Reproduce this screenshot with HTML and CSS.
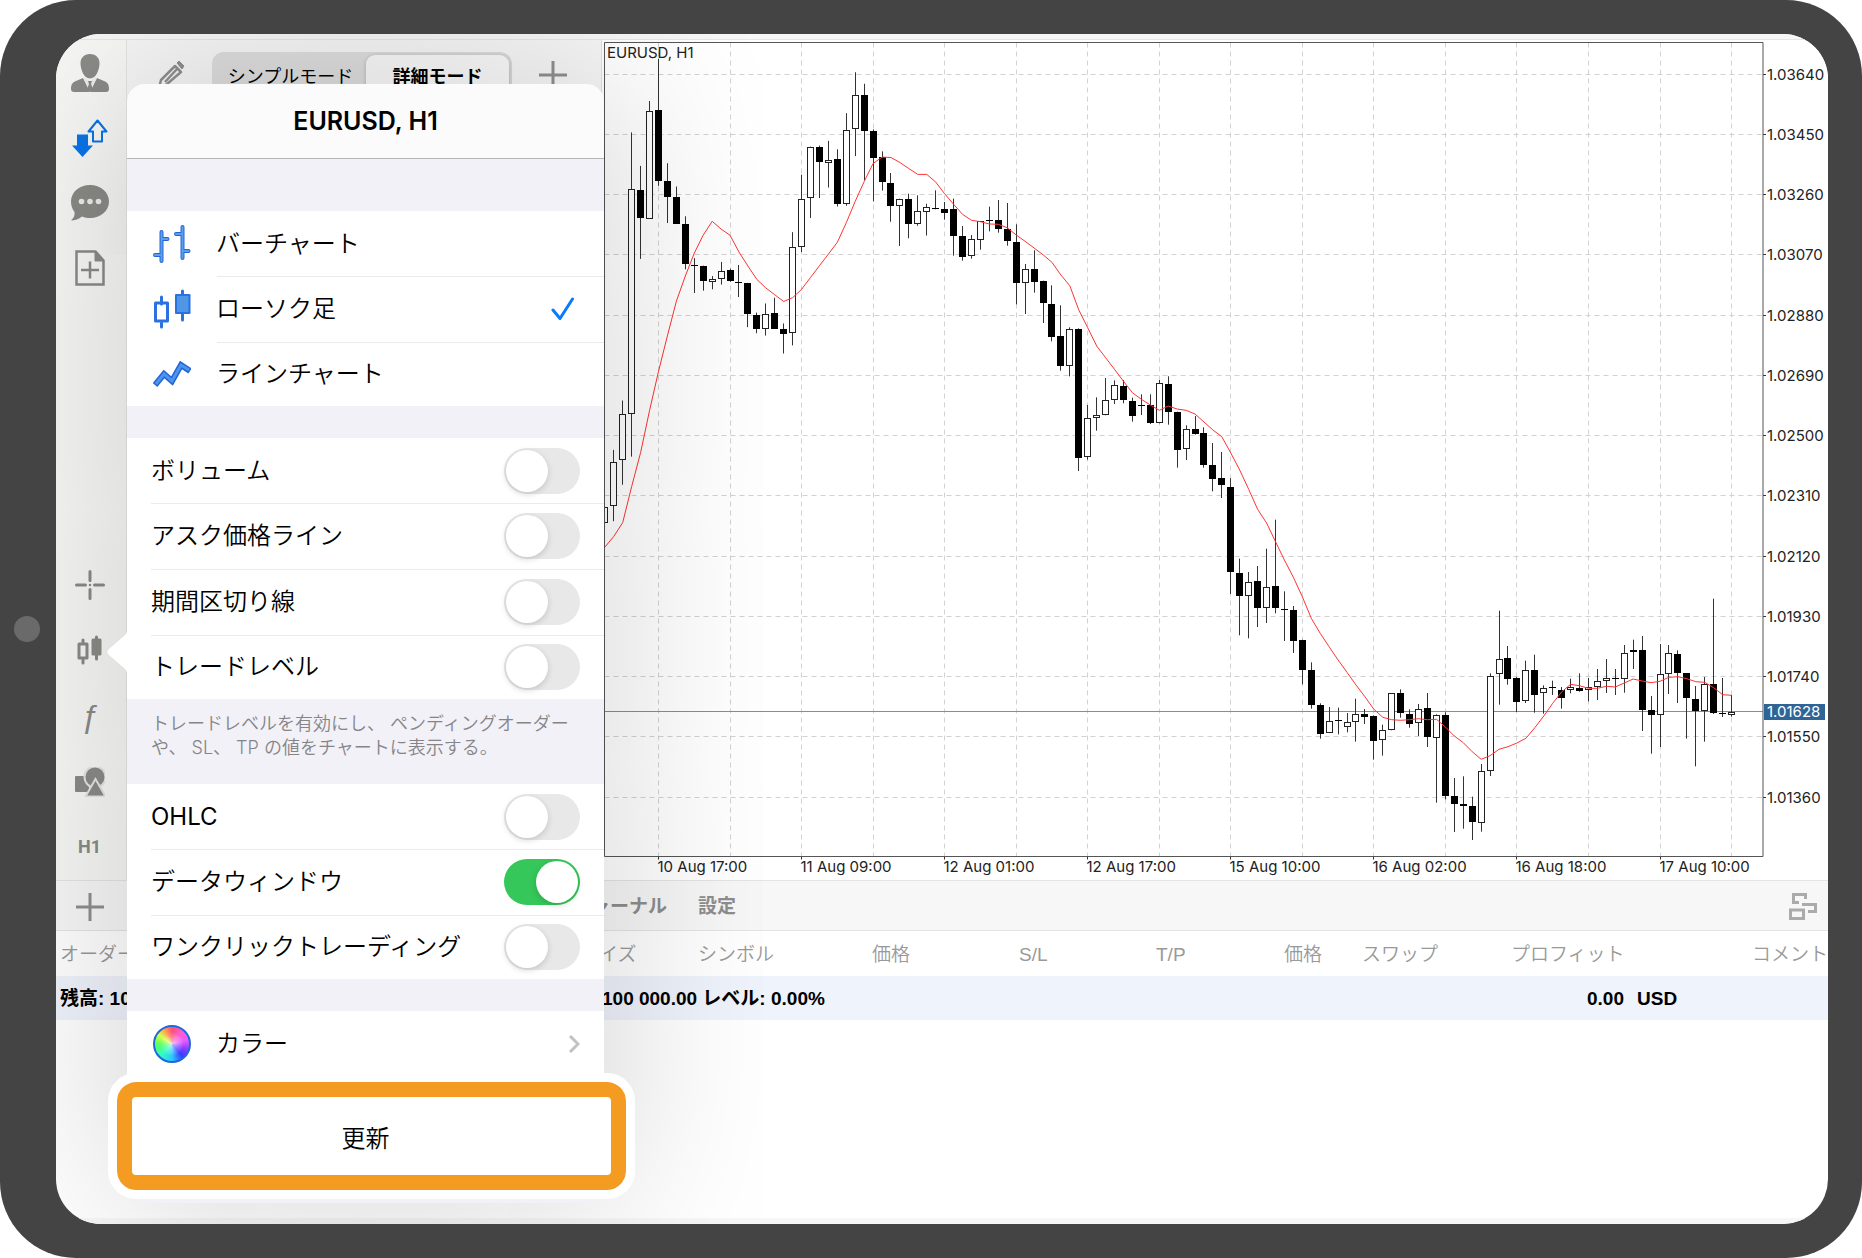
FILE: index.html
```html
<!DOCTYPE html>
<html lang="ja">
<head>
<meta charset="utf-8">
<meta name="viewport" content="width=device-width, initial-scale=1">
<title>EURUSD, H1</title>
<link rel="stylesheet" href="styles.css">
</head>
<body>
<div class="device">
  <div class="screen">
    <div class="status-strip"></div>

    <main class="workspace">
      <nav class="rail" aria-label="ツール">
        <div class="rail-group rail-top">
          <button class="icon-button" aria-label="アカウント">
            <svg width="38" height="38" viewBox="0 0 38 38" fill="#8a8a86"><path d="M19 0c6 0 9.500 4 9.500 9 0 6-3 15.500-9.500 15.500S9.500 15 9.500 9C9.500 4 13 0 19 0z"/><path d="M12 24 19 38H3c-2 0-3-1-3-3 0-5 2-7 5-8zM26 24l-7 14h16c2 0 3-1 3-3 0-5-2-7-5-8z"/><path d="m12 23 7 15 7-15-7 4z" fill="#ececeb"/><path d="M17 27h4l-1 3 2 5-3 3-3-3 2-5z"/></svg>
          </button>
          <button class="icon-button" aria-label="トレード">
            <svg width="36" height="38" viewBox="0 0 36 38"><path d="m25.500 1.500 9 11h-4.500v10h-9v-10h-4.500z" fill="none" stroke="#0a74e8" stroke-width="2" stroke-linejoin="round"/><path d="M5 15.500h11v11h5L10.500 38 0 26.500h5z" fill="#0a74e8"/></svg>
          </button>
          <button class="icon-button" aria-label="チャット">
            <svg width="38" height="36" viewBox="0 0 38 36"><path d="M19 0c10.500 0 19 7 19 16.500S29.500 33 19 33c-3 0-5-.5-8-1.500C8 34 4 35.500 0 35.500 3 33 4 30 3.500 27 1 24 0 20 0 16.500 0 7 8.500 0 19 0z" fill="#8a8a86"/><circle cx="10.500" cy="16.500" r="2.800" fill="#ececeb"/><circle cx="19" cy="16.500" r="2.800" fill="#ececeb"/><circle cx="27.500" cy="16.500" r="2.800" fill="#ececeb"/></svg>
          </button>
          <button class="icon-button" aria-label="新規注文">
            <svg width="30" height="36" viewBox="0 0 30 36" fill="none" stroke="#8a8a86" stroke-width="2.500"><path d="M1.500 1.500h19l8 9v24h-27z"/><path d="M20 1v10h9z" fill="#8a8a86" stroke-width="1"/><path d="M15 11.500v17M6 20h18"/></svg>
          </button>
        </div>
        <div class="rail-group rail-bottom">
          <button class="icon-button" aria-label="クロスヘア">
            <svg width="30" height="30" viewBox="0 0 30 30" stroke="#8a8a86" stroke-width="3" stroke-linecap="round"><path d="M15 1.500v9M15 19.500v9M1.500 15h9M19.500 15h9"/><path d="M15 15h.01" stroke-width="2.500"/></svg>
          </button>
          <button class="icon-button" aria-label="チャート種別">
            <svg width="26" height="30" viewBox="0 0 26 30" stroke="#8a8a86" stroke-width="3" stroke-linecap="round" stroke-linejoin="round"><path d="M6 5v3M6 25v3M19.500 2v3M19.500 20v4"/><path d="M2 9h8v14H2z" fill="none"/><path d="M16 5h7v14h-7z" fill="#8a8a86"/></svg>
          </button>
          <button class="icon-button indicator" aria-label="インディケータ">ƒ</button>
          <button class="icon-button" aria-label="オブジェクト">
            <svg width="30" height="30" viewBox="0 0 30 30" fill="#8a8a86"><rect x="0" y="9" width="14" height="16" rx="1"/><circle cx="20" cy="10" r="10.500" stroke="#e4e4e3" stroke-width="2"/><path d="m20.500 12 10 17.500h-20z" stroke="#e4e4e3" stroke-width="2"/></svg>
          </button>
          <button class="icon-button timeframe">H1</button>
        </div>
      </nav>

      <section class="quotes">
        <div class="quotes-bar">
          <button class="bar-button" aria-label="編集">
            <svg width="28" height="30" viewBox="0 0 28 30" fill="none" stroke="#8f8f8f" stroke-width="2.500" stroke-linejoin="round"><path d="M18 6 4 20l-2 8 8-4L24 12zM8 22 20 9"/><path d="m20 3 2-2 5 5-2 3z" fill="#8f8f8f" stroke-width="1"/></svg>
          </button>
          <div class="segmented">
            <button class="segment">シンプルモード</button>
            <button class="segment segment-active">詳細モード</button>
          </div>
          <button class="bar-button" aria-label="追加">
            <svg width="28" height="28" viewBox="0 0 28 28" stroke="#8f8f8f" stroke-width="3"><path d="M14 0v28M0 14h28"/></svg>
          </button>
        </div>
      </section>

      <section class="chart-pane">
        <svg id="chart" class="chart" viewBox="0 0 1226 840" preserveAspectRatio="xMinYMin meet" role="img" aria-label="EURUSD, H1"></svg>
      </section>
    </main>

    <section class="terminal">
      <div class="terminal-bar">
        <button class="icon-button terminal-add" aria-label="新規">
          <svg width="28" height="28" viewBox="0 0 28 28" stroke="#8f8f8f" stroke-width="3"><path d="M14 0v28M0 14h28"/></svg>
        </button>
        <a class="terminal-tab" href="#journal">ジャーナル</a>
        <a class="terminal-tab" href="#settings">設定</a>
        <button class="bar-button terminal-layout" aria-label="レイアウト">
          <svg width="28" height="27" viewBox="0 0 28 27" fill="none" stroke="#ababab" stroke-width="3"><path d="M10 9.500H4.500v-8h12V6"/><path d="M13 11.500h13.500v7H19"/><path d="M1.500 17h13v8.500h-13z"/></svg>
        </button>
      </div>
      <table class="orders">
        <colgroup><col class="w-order"><col class="w-size"><col class="w-symbol"><col class="w-price"><col class="w-sl"><col class="w-tp"><col class="w-now"><col class="w-swap"><col><col class="w-comment"></colgroup>
        <thead>
          <tr><th>オーダー</th><th>サイズ</th><th>シンボル</th><th>価格</th><th>S/L</th><th>T/P</th><th>価格</th><th>スワップ</th><th>プロフィット</th><th>コメント</th></tr>
        </thead>
        <tbody>
          <tr><td>残高: 100 000.00</td><td class="equity" colspan="7">100 000.00 レベル: 0.00%</td><td class="profit" colspan="2"><span>0.00</span><span>USD</span></td></tr>
        </tbody>
      </table>
      <div class="home-strip"></div>
    </section>

    <aside class="popover">
      <svg class="popover-arrow" width="20" height="44" viewBox="0 0 20 44" fill="#fff"><path d="M20 0c0 3-1 4-3 6L2 19c-2 2-2 4 0 6l15 13c2 2 3 3 3 6z"/></svg>
      <h1 class="popover-title">EURUSD, H1</h1>

      <div class="group group-first">
        <label class="row row-icon">
          <svg class="row-glyph" width="38" height="40" viewBox="0 0 38 40" fill="none" stroke-linecap="round"><g stroke="#2265d8" stroke-width="4"><path d="M8.500 8v29M8.500 15h6M2 31h6M29.500 3v31M23 10h6M29.500 27h6"/></g><g stroke="#5c9fea" stroke-width="2"><path d="M8.500 8v29M8.500 15h6M2 31h6M29.500 3v31M23 10h6M29.500 27h6"/></g></svg>
          <span class="row-text">バーチャート</span>
          <input class="pick" type="radio" name="kind">
          <svg class="tick" width="24" height="24" viewBox="0 0 24 24"><path d="m2 13 7 8.500L21.500 2" fill="none" stroke="#0a7aff" stroke-width="3" stroke-linecap="round" stroke-linejoin="round"/></svg>
        </label>
        <label class="row row-icon">
          <svg class="row-glyph" width="38" height="40" viewBox="0 0 38 40" fill="none" stroke="#2a72e0" stroke-width="3" stroke-linejoin="round"><path d="M8.500 8v7M8.500 34v4M29.500 2v5M29.500 24v7" stroke-linecap="round"/><path d="M2.500 14h12v18h-12z"/><path d="M23 6h13.500v18H23z" fill="#4f97e6" stroke-width="2"/></svg>
          <span class="row-text">ローソク足</span>
          <input class="pick" type="radio" name="kind" checked>
          <svg class="tick" width="24" height="24" viewBox="0 0 24 24"><path d="m2 13 7 8.500L21.500 2" fill="none" stroke="#0a7aff" stroke-width="3" stroke-linecap="round" stroke-linejoin="round"/></svg>
        </label>
        <label class="row row-icon">
          <svg class="row-glyph" width="38" height="40" viewBox="0 0 38 40" fill="none"><path d="M2 31 11 20l8 7 9-16 9 6" stroke="#2265d8" stroke-width="6"/><path d="M3 30 11 20l8 7 9-16 8 5" stroke="#4c94ec" stroke-width="3"/></svg>
          <span class="row-text">ラインチャート</span>
          <input class="pick" type="radio" name="kind">
          <svg class="tick" width="24" height="24" viewBox="0 0 24 24"><path d="m2 13 7 8.500L21.500 2" fill="none" stroke="#0a7aff" stroke-width="3" stroke-linecap="round" stroke-linejoin="round"/></svg>
        </label>
      </div>

      <div class="group">
        <label class="row"><span class="row-text">ボリューム</span><input class="switch" type="checkbox"></label>
        <label class="row"><span class="row-text">アスク価格ライン</span><input class="switch" type="checkbox"></label>
        <label class="row"><span class="row-text">期間区切り線</span><input class="switch" type="checkbox"></label>
        <label class="row"><span class="row-text">トレードレベル</span><input class="switch" type="checkbox"></label>
      </div>
      <p class="hint">トレードレベルを有効にし、 ペンディングオーダー<br>や、 SL、 TP の値をチャートに表示する。</p>

      <div class="group group-flush">
        <label class="row"><span class="row-text row-latin">OHLC</span><input class="switch" type="checkbox"></label>
        <label class="row"><span class="row-text">データウィンドウ</span><input class="switch" type="checkbox" checked></label>
        <label class="row"><span class="row-text">ワンクリックトレーディング</span><input class="switch" type="checkbox"></label>
      </div>

      <div class="group">
        <a class="row row-icon row-link" href="#colors">
          <span class="wheel"></span>
          <span class="row-text">カラー</span>
          <svg width="12" height="18" viewBox="0 0 12 18"><path d="m2 1 8 8-8 8" fill="none" stroke="#c2c2c5" stroke-width="3"/></svg>
        </a>
      </div>
      <button class="refresh">更新</button>
    </aside>
  </div>
</div>
<script src="chart.js"></script>
</body>
</html>
```
FILE: styles.css
```css
* { box-sizing: border-box; }

body {
  margin: 0;
  background: #fff;
  color: #000;
  font-family: Inter, "Noto Sans CJK JP", sans-serif;
  font-size: 24px;
}

button {
  margin: 0;
  padding: 0;
  border: 0;
  background: none;
  color: inherit;
  font: inherit;
}

a { color: inherit; text-decoration: none; }

/* Tablet body; the dot on the left bezel is the home sensor */
.device {
  position: relative;
  display: flex;
  min-height: 100vh;
  padding: 34px 34px 34px 56px;
  border-radius: 76px;
  background: #444;
}

.device::before {
  content: "";
  position: absolute;
  left: 14px;
  top: calc(50% - 13px);
  width: 26px;
  height: 26px;
  border-radius: 50%;
  background: #6a6a6a;
}

.screen {
  position: relative;
  flex: 1;
  min-width: 0;
  display: flex;
  flex-direction: column;
  overflow: hidden;
  border-radius: 45px;
  background: #fff;
}

.status-strip {
  height: 6px;
  background: #f7f7f7;
  border-bottom: 1px solid #e6e6e6;
}

.workspace {
  display: grid;
  grid-template-columns: 71px 475px 1fr;
}

.rail {
  display: flex;
  flex-direction: column;
  justify-content: space-between;
  background: #f7f7f6;
  border-right: 1px solid #e6e6e6;
}

.rail-group { display: flex; flex-direction: column; padding-right: 3px; }
.rail-top { height: 260px; }
.rail-bottom { height: 328px; }

.icon-button {
  flex: 1;
  display: flex;
  align-items: center;
  justify-content: center;
  color: #8a8a86;
}

.indicator {
  font: italic 400 32px/32px "Liberation Sans", sans-serif;
}

.timeframe {
  font: 700 18px/20px Roboto, sans-serif;
}

.quotes { background: #f6f6f6; border-right: 1px solid #e2e2e2; }

.quotes-bar {
  display: flex;
  align-items: center;
  justify-content: space-between;
  height: 74px;
  padding: 0 34px 4px 30px;
  border-bottom: 1px solid #d8d8d8;
}

.bar-button { display: flex; }

.segmented {
  display: flex;
  width: 300px;
  height: 46px;
  padding: 3px;
  border-radius: 12px;
  background: #dededf;
  font-size: 18px;
}

.segment { flex: 1; border-radius: 9px; }

.segment-active {
  flex: none;
  width: 143px;
  background: #f9f9f9;
  box-shadow: 0 1px 4px rgba(0, 0, 0, .2);
  font-weight: 700;
}

.chart-pane { min-width: 0; background: #fff; }
.chart { display: block; width: 100%; }
.chart text { font: 15px Inter, sans-serif; }

.terminal { flex: 1; display: flex; flex-direction: column; }

.terminal-bar {
  display: flex;
  align-items: center;
  height: 51px;
  padding: 2px 11px 0 0;
  border-top: 1px solid #e4e4e4;
  border-bottom: 1px solid #e4e4e4;
  background: #f7f7f7;
  color: #8e8e8e;
  font-size: 19px;
  line-height: 24px;
  font-weight: 700;
}

.terminal-add { flex: none; width: 68px; margin-right: 449px; }
.terminal-tab { margin-right: 31px; }
.terminal-layout { margin-left: auto; }

.orders {
  width: 100%;
  table-layout: fixed;
  border-collapse: collapse;
  font: 19px/20px "Liberation Sans", "Noto Sans CJK JP", sans-serif;
  white-space: nowrap;
}

.orders th, .orders td { padding: 2px 0 0 4px; text-align: left; }
.orders th { height: 45px; color: #999; font-weight: 350; }
.orders td { height: 44px; background: #eff3fb; font-weight: 700; }
.orders .equity { padding-left: 26px; }
.orders .profit { padding-left: 80px; }
.profit span + span { margin-left: 13px; }

.w-order { width: 520px; }
.w-size { width: 118px; }
.w-symbol { width: 174px; }
.w-price { width: 147px; }
.w-sl { width: 137px; }
.w-tp { width: 128px; }
.w-now { width: 78px; }
.w-swap { width: 149px; }
.w-comment { width: 80px; }

.home-strip { height: 6px; margin-top: auto; background: #f7f7f7; }

/* Chart settings popover, anchored to the rail */
.popover {
  position: absolute;
  left: 71px;
  top: 50px;
  width: 477px;
  padding-bottom: 13px;
  border-radius: 18px;
  background: #f2f1f7;
  box-shadow: 0 0 190px rgba(0, 0, 0, .2);
}

.popover-arrow { position: absolute; left: -20px; top: 546px; }

.popover-title {
  display: flex;
  align-items: center;
  justify-content: center;
  height: 75px;
  margin: 0;
  border-bottom: 1px solid #b5b5b8;
  border-radius: 18px 18px 0 0;
  background: #fbfbfb;
  font-size: 25px;
  font-weight: 600;
}

.group { margin-top: 32px; background: #fff; }
.group-first { margin-top: 52px; }
.group-flush { margin-top: 0; }

.row {
  position: relative;
  display: flex;
  align-items: center;
  height: 65px;
  padding: 0 24px;
}

.row + .row { height: 66px; }
.row + .row:last-child { height: 64px; }

.row + .row::before {
  content: "";
  position: absolute;
  left: 24px;
  right: 0;
  top: 0;
  border-top: 1px solid #ebebed;
}

.row-icon { padding-left: 26px; }
.row-icon + .row-icon::before { left: 90px; }
.row-icon .row-text { margin-left: 25px; }
.row-text { flex: 1; line-height: 32px; font-weight: 350; }
.row-latin { font-weight: 400; }
.row-glyph { flex: none; }

.pick { appearance: none; margin: 0; width: 0; height: 0; }
.tick { visibility: hidden; margin-right: 5px; }
.pick:checked + .tick { visibility: visible; }

.switch {
  appearance: none;
  display: flex;
  align-items: center;
  width: 76px;
  height: 46px;
  margin: 0;
  padding: 0 2px;
  border-radius: 23px;
  background: #e8e8e9;
}

.switch::before {
  content: "";
  width: 42px;
  height: 42px;
  border-radius: 50%;
  background: #fff;
  box-shadow: 0 2px 6px rgba(0, 0, 0, .16);
}

.switch:checked { justify-content: flex-end; background: #35c759; }

.hint {
  height: 85px;
  margin: 0;
  padding: 13px 0 0 24px;
  color: #858588;
  font-size: 18px;
  font-weight: 350;
  line-height: 24px;
  white-space: nowrap;
}

.wheel {
  width: 38px;
  height: 38px;
  border: 2px solid #1f68dc;
  border-radius: 50%;
  background:
    radial-gradient(circle, rgba(255, 255, 255, .6), rgba(255, 255, 255, 0) 50%),
    conic-gradient(#ff5078, #ff5cd0 40deg, #e65cff 75deg, #8a3cff 110deg, #3a3cff 140deg, #2cc8ff 180deg, #30ffc0 225deg, #5cff5c 270deg, #d8ff50 305deg, #ff9a50 335deg, #ff5078);
}

/* Emphasised action: orange frame with a white halo */
.refresh {
  display: block;
  width: 509px;
  height: 108px;
  margin: 6px 0 0 -10px;
  padding-right: 12px;
  border: 15px solid #f49b22;
  border-radius: 19px;
  outline: 9px solid #fff;
  background: #fff;
  font-weight: 350;
}
```
FILE: chart.js
```js
// Hourly candles: [filled, high, bodyTop, bodyBottom, low].
// Each block has its own vertical base and number of units per pixel.
const blocks = [
  { base: -10, units: 2.958, candles: [
    [0,1412,1412,1457,1457],[0,1242,1277,1408,1453],[0,1096,1135,1273,1345],[0,303,471,1135,1262],[1,402,472,555,677],[0,210,241,559,559],
    [1,85,237,447,461],[1,394,446,495,571],[1,463,494,573,574],[1,551,574,693,708],[1,675,695,697,778],[1,697,697,741,771],[0,728,738,744,767],[0,686,713,738,753],
    [1,706,710,741,745],[1,695,746,748,790],[1,748,748,839,879],[1,836,843,884,897],[0,809,839,884,904],[1,792,836,884,884],[1,868,885,899,957],[0,598,643,897,933],
    [0,428,501,641,657],[0,345,345,497,556],[1,342,347,390,497],[0,328,386,392,466],[1,353,382,515,522],[0,246,297,516,520],[0,125,193,292,373],[1,159,192,299,445],
    [1,294,298,379,507],[1,359,377,449,475],[1,423,454,522,567],[0,499,499,522,639],[1,484,499,573,616],[0,489,536,573,579],[0,514,524,539,608]
  ], average: [1530,1498,1457,1350,1250,1125,1010,905,802,728,660,607,566,589,607,657,698,738,763,783,803,792,767,732,697,663,628,570,507,448,395,376,377,392,410,427,427] },
  { base: 60, units: 3, candles: [
    [1,271,323,328,328],[1,306,328,338,359],[1,296,327,408,467],[1,378,407,471,482],[0,405,416,469,476],[0,364,364,419,449],[1,320,360,363,394],[1,300,360,386,398],
    [1,309,387,422,437],[1,373,427,548,613],[0,492,508,548,642],[1,451,508,545,578],[1,542,544,608,669],[1,556,611,710,724],[1,616,709,797,812],[0,682,686,797,829],
    [1,685,687,1073,1113],[0,915,955,1070,1079],[0,892,946,954,992],[0,834,899,946,946],[0,841,856,901,912],[1,840,859,901,910],[1,893,904,948,965],[1,883,915,918,945],
    [1,883,916,968,972],[0,840,850,970,970],[1,829,852,935,974],[1,935,936,1049,1103],[0,976,988,1048,1080],[1,948,987,1002,1004],[1,982,999,1094,1103],[1,1029,1094,1136,1174],[1,1056,1134,1156,1194]
  ], average: [246,281,313,343,361,365,372,373,383,405,424,444,464,487,525,557,630,683,738,773,808,844,878,898,915,931,918,927,931,942,966,990,1010] },
  { base: 380, units: 3, candles: [
    [1,175,201,456,522],[1,416,458,527,646],[0,456,486,527,655],[1,438,483,565,621],[0,386,502,565,609],[1,299,498,563,580],[1,514,567,571,663],[1,558,570,663,699],
    [1,659,661,751,793],[1,727,751,855,866],[1,850,856,941,956],[0,861,904,938,938],[1,863,901,904,943],[0,879,906,922,937],[0,836,881,907,965],[1,867,881,890,912],
    [1,886,889,963,1019],[0,914,931,961,1007],[0,819,819,931,931],[1,808,819,880,893],[1,868,881,911,923],[0,852,866,910,948],[1,819,863,951,981],[0,883,886,955,1148],
    [1,877,886,1128,1138],[1,1074,1129,1151,1236],[1,1069,1151,1157,1226],[1,1130,1158,1207,1260],[0,1032,1054,1208,1235],[0,760,767,1052,1068]
  ], average: [99,150,208,268,309,365,420,472,530,595,640,680,720,757,795,830,868,892,899,901,899,896,899,898,921,948,968,995,1018,1007] },
  { base: 520, units: 3, candles: [
    [0,152,296,341,434],[1,258,293,356,374],[1,351,355,426,456],[0,302,331,424,429],[1,284,331,404,458],[0,376,385,400,461],[1,362,382,384,405],[1,381,390,415,446],
    [0,356,382,391,400],[1,340,384,393,395],[0,354,381,391,424],[0,327,363,382,420],[0,297,354,364,399],[1,327,353,355,405],[0,255,278,356,398],[1,239,270,276,327],
    [1,228,270,449,513],[1,408,450,465,581],[0,252,343,464,561],[0,255,278,341,402],[1,271,282,340,429],[1,340,340,415,536],[1,378,417,454,619],[0,351,373,453,545],
    [1,116,371,460,462],[1,354,460,462,471],[0,405,457,464,470]
  ], average: [568,560,549,535,503,468,430,396,373,377,385,385,379,381,369,357,363,368,364,352,350,356,365,367,383,404,406] }
];

const area = { left: 2.5, top: 2.5, right: 1161, bottom: 816.5 };
const originX = 56.5, step = 8.942;
const parts = [];
const line = (x1, y1, x2, y2, extra) =>
  parts.push(`<line x1="${x1}" y1="${y1}" x2="${x2}" y2="${y2}" ${extra}/>`);
const snap = v => Math.floor(v) + 0.5;
const text = (x, y, s, fill = '#222') => parts.push(`<text x="${x}" y="${y}" fill="${fill}">${s}</text>`);

const grid = 'stroke="#d2d2d2" stroke-dasharray="5 4"';
const tickMark = 'stroke="#333"';
const dates = ['10 Aug 17:00', '11 Aug 09:00', '12 Aug 01:00', '12 Aug 17:00', '15 Aug 10:00', '16 Aug 02:00', '16 Aug 18:00', '17 Aug 10:00'];

for (let i = 0; i < 13; i++) {
  const y = snap(34.2 + i * 60.25);
  line(area.left, y, area.right, y, grid);
  line(area.right, y, area.right + 3, y, tickMark);
  text(1165, y + 5, (1.0364 - i * 0.0019).toFixed(5));
}
for (let i = 0; i < 16; i++) {
  const x = snap(originX + i * step * 8);
  line(x, area.top, x, area.bottom, grid);
  if (i % 2 === 0) {
    line(x, area.bottom, x, area.bottom + 3, tickMark);
    text(x - 1, 832, dates[i / 2]);
  }
}

// Current price
line(area.left, 671.5, area.right, 671.5, 'stroke="#6a94b8"');

parts.push('<clipPath id="plot"><rect x="2" y="2" width="1159" height="815"/></clipPath><g clip-path="url(#plot)">');
const points = [];
let index = -6;
for (const block of blocks) {
  const toY = v => block.base + v / block.units;
  block.candles.forEach(([filled, high, top, bottom, low], k) => {
    const x = snap(originX + index * step);
    const y1 = Math.round(toY(top)), y2 = Math.max(Math.round(toY(bottom)), y1 + 1);
    line(x, toY(high), x, toY(low), 'stroke="#333"');
    if (filled) parts.push(`<rect x="${x - 3.5}" y="${y1}" width="7" height="${y2 - y1}"/>`);
    else parts.push(`<rect x="${x - 3}" y="${y1 + 0.5}" width="6" height="${Math.max(y2 - y1 - 1, 1)}" fill="#fff" stroke="#222"/>`);
    points.push(`${(originX + index * step).toFixed(1)},${toY(block.average[k]).toFixed(1)}`);
    index++;
  });
}
parts.push(`<polyline points="${points.join(' ')}" fill="none" stroke="#f33" stroke-width="1"/></g>`);

parts.push(`<path d="M${area.left} ${area.top}H${area.right}V${area.bottom}H${area.left}z" fill="none" stroke="#555"/>`);
text(5, 18, 'EURUSD, H1');
parts.push('<rect x="1162" y="664" width="61" height="16" fill="#2f6496"/>');
text(1165, 677, '1.01628', '#fff');

document.getElementById('chart').innerHTML = parts.join('');
```
